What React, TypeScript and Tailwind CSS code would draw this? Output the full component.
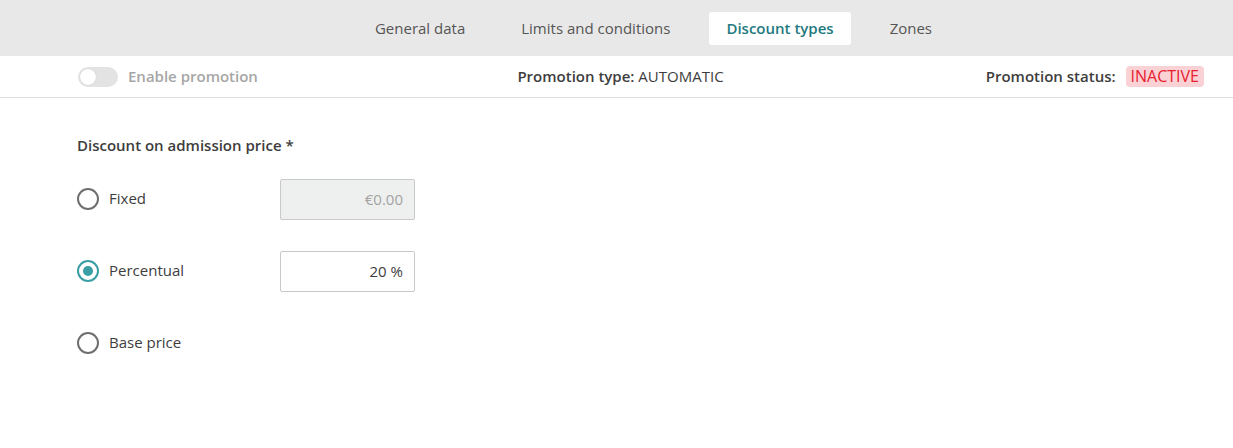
import { useState } from "react";

const TABS = ["General data", "Limits and conditions", "Discount types", "Zones"];

type Option = { id: string; label: string; value?: string; disabled?: boolean };

const OPTIONS: Option[] = [
  { id: "fixed", label: "Fixed", value: "€0.00", disabled: true },
  { id: "percent", label: "Percentual", value: "20 %" },
  { id: "base", label: "Base price" },
];

function Radio({ checked }: { checked: boolean }) {
  return (
    <span
      className={`grid h-[22px] w-[22px] shrink-0 place-items-center rounded-full border-2 ${
        checked ? "border-[#3a9ea5]" : "border-[#6f6f6f]"
      }`}
    >
      {checked && <span className="h-[10px] w-[10px] rounded-full bg-[#3a9ea5]" />}
    </span>
  );
}

export default function App() {
  const [selected, setSelected] = useState("percent");

  return (
    <div className="h-[448px] w-full bg-white font-['Open_Sans','Liberation_Sans',sans-serif] text-[15px] text-[#3d3d3d]">
      {/* tabs */}
      <div className="flex h-[56px] items-center justify-center bg-[#e8e8e8] pl-[74px]">
        <div className="flex items-center gap-[22px]">
          {TABS.map((t) => {
            const active = t === "Discount types";
            return (
              <div
                key={t}
                className={`flex h-[33px] items-center rounded-[3px] px-[17px] ${
                  active ? "bg-white font-semibold text-[#1f7a80]" : "text-[#555]"
                }`}
              >
                {t}
              </div>
            );
          })}
        </div>
      </div>

      {/* status row */}
      <div className="grid h-[42px] grid-cols-3 items-center border-b border-[#dcdcdc] pl-[78px] pr-[29px]">
        <div className="flex items-center gap-[10px]">
          <span className="relative h-[20px] w-[40px] rounded-full bg-[#e3e3e3]">
            <span className="absolute left-[2px] top-[2px] h-[16px] w-[16px] rounded-full bg-white shadow-[0_0_1px_rgba(0,0,0,0.2)]" />
          </span>
          <span className="font-semibold text-[#a6a6a6]">Enable promotion</span>
        </div>
        <div className="pr-[41px] text-center text-[#3d3d3d]">
          <span className="font-semibold">Promotion type:</span> AUTOMATIC
        </div>
        <div className="flex items-center justify-end gap-[10px]">
          <span className="font-semibold">Promotion status:</span>
          <span className="rounded-[4px] bg-[#fad1d4] px-[5px] text-[16px] leading-[21px] text-[#e8202e]">INACTIVE</span>
        </div>
      </div>

      {/* content */}
      <div className="px-[77px] pt-[36px]">
        <div className="font-semibold text-[#3d3d3d]">Discount on admission price *</div>
        <div className="mt-[22px] flex flex-col gap-[32px]">
          {OPTIONS.map((o) => (
            <div key={o.id} className="flex h-[40px] items-center">
              <button
                onClick={() => setSelected(o.id)}
                className="flex w-[203px] items-center gap-[10px] text-left"
              >
                <Radio checked={selected === o.id} />
                <span>{o.label}</span>
              </button>
              {o.value && (
                <div
                  className={`mt-[1px] flex h-[41px] w-[135px] items-center justify-end rounded-[2px] border border-[#c9c9c9] px-[11px] ${
                    o.disabled ? "bg-[#eef0ef] text-[#a3a3a3]" : "bg-white text-[#3d3d3d]"
                  }`}
                >
                  {o.value}
                </div>
              )}
            </div>
          ))}
        </div>
      </div>
    </div>
  );
}
